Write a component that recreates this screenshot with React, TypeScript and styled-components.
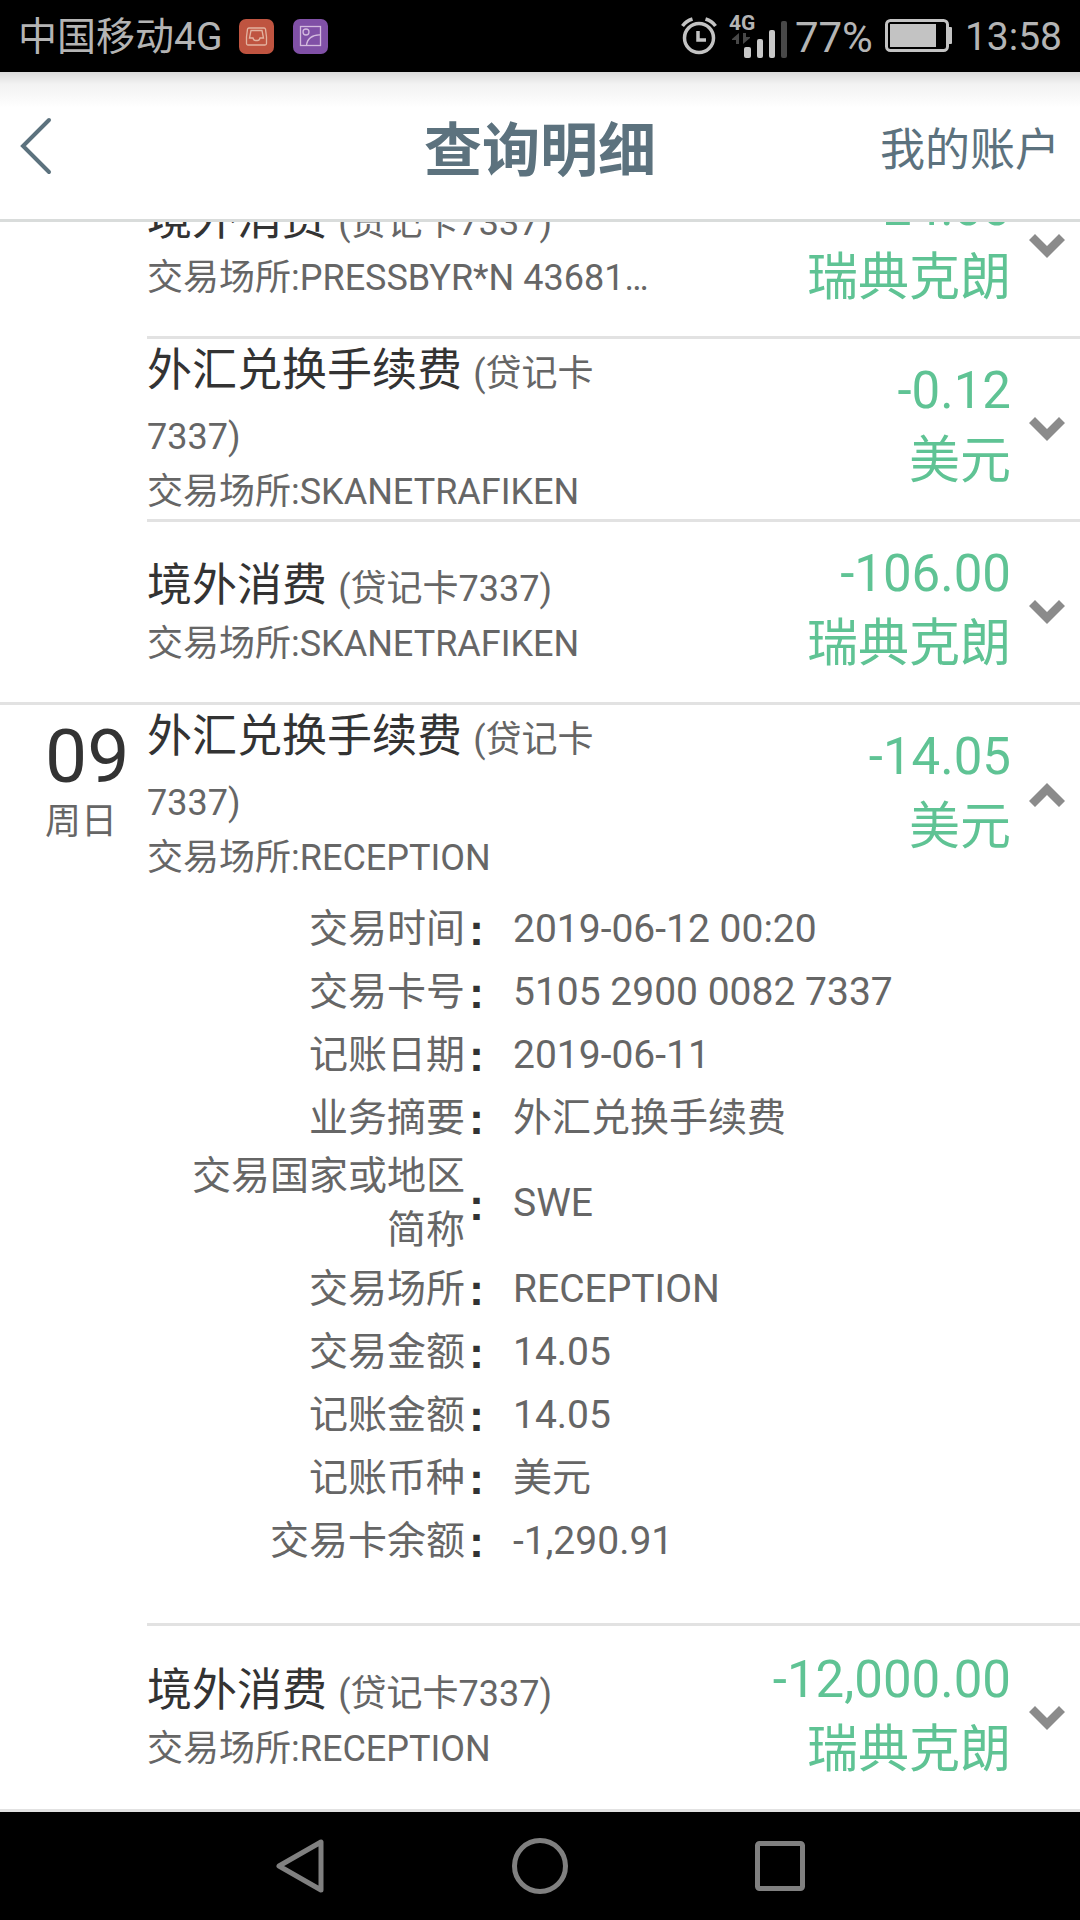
import React, { useState } from "react";
import styled, { createGlobalStyle } from "styled-components";

const GlobalStyle = createGlobalStyle`
  * { box-sizing: border-box; }
  body {
    margin: 0;
    background: #fff;
    font-family: Roboto, "Noto Sans CJK SC", sans-serif;
  }
  button {
    padding: 0;
    border: 0;
    background: none;
    font: inherit;
    cursor: pointer;
  }
`;

const Screen = styled.div`
  display: flex;
  flex-direction: column;
  min-height: 100vh;
`;

const StatusBar = styled.div`
  display: flex;
  align-items: center;
  justify-content: space-between;
  height: 72px;
  padding: 0 18px;
  background: #000;
  color: #b4b4b4;
  font-size: 39px;
  line-height: 69px;
`;

const StatusGroup = styled.div<{ $gap: number }>`
  display: flex;
  align-items: center;
  gap: ${(p) => p.$gap}px;
`;

const StatusText = styled.span`
  padding-top: 3px;
`;

const BatteryPercent = styled(StatusText)`
  font-size: 42px;
`;

const Network = styled.div`
  display: flex;
  align-items: flex-end;
  position: relative;
  height: 44px;
  margin-right: -4px;
`;

const NetworkType = styled.span`
  position: absolute;
  top: 0;
  left: 0;
  font-size: 21px;
  font-weight: 700;
  line-height: 18px;
`;

const Header = styled.header`
  display: grid;
  grid-template-columns: 1fr auto 1fr;
  align-items: center;
  height: 150px;
  padding: 0 20px;
  border-bottom: 3px solid #d9dcdb;
  background: linear-gradient(#dadada, #f2f2f2 12px, #fff 36px);
  color: #5c727e;
`;

const BackButton = styled.button`
  display: flex;
  justify-self: start;
  color: inherit;
`;

const Title = styled.h1`
  margin: 0;
  padding-top: 10px;
  font-size: 58px;
  font-weight: 700;
  line-height: 84px;
`;

const HeaderLink = styled.a`
  justify-self: end;
  padding-top: 10px;
  color: inherit;
  font-size: 45px;
  line-height: 66px;
  text-decoration: none;
`;

const Main = styled.main`
  flex: 1;
  overflow: hidden;
`;

const List = styled.div`
  margin-top: -66px;
`;

const DayGroup = styled.section`
  display: grid;
  grid-template-columns: 147px 1fr;
  border-bottom: 3px solid #e2e2e2;
`;

const DateCell = styled.div`
  padding: 12px 0 0 45px;
`;

const DayNumber = styled.div`
  color: #333;
  font-size: 75px;
  line-height: 78px;
`;

const Weekday = styled.div`
  color: #666;
  font-size: 36px;
  line-height: 54px;
`;

const Entry = styled.article`
  & + & {
    border-top: 3px solid #e2e2e2;
  }
`;

const EntryRow = styled.div`
  display: grid;
  grid-template-columns: 510px 1fr 69px;
  align-items: center;
  min-height: 180px;

  ${DayGroup}:last-child & {
    min-height: 183px;
  }

  ${DayGroup}:last-child ${Entry}:first-child & {
    min-height: 180px;
  }
`;

const EntryTitle = styled.h2`
  margin: 0;
  color: #333;
  font-size: 45px;
  font-weight: 400;
  line-height: 63px;
`;

const CardName = styled.span`
  color: #666;
  font-size: 36px;
  line-height: 36px;
`;

const Place = styled.p`
  margin: 0;
  overflow: hidden;
  color: #666;
  font-size: 36px;
  line-height: 54px;
  text-overflow: ellipsis;
  white-space: nowrap;
`;

const Amount = styled.div`
  padding-bottom: 6px;
  color: #5fc394;
  font-size: 51px;
  line-height: 70px;
  text-align: right;
  white-space: nowrap;
`;

const Toggle = styled.button<{ $open: boolean }>`
  display: flex;
  align-items: center;
  justify-content: center;
  height: 72px;
  padding-left: 3px;
  color: #8b8b8b;

  svg {
    transform: ${(p) => (p.$open ? "rotate(180deg)" : "none")};
  }
`;

const Details = styled.dl`
  margin: 0;
  padding: 12px 0 51px;
`;

const DetailRow = styled.div`
  display: grid;
  grid-template-columns: 318px 48px 1fr;
  align-items: center;
  min-height: 63px;
  color: #666;
  font-size: 39px;
  line-height: 54px;
`;

const DetailLabel = styled.dt`
  justify-self: end;
  width: 280px;
  text-align: right;
`;

const Colon = styled.span`
  padding: 3px 0 0 4px;
  color: #333;
  font-family: "Liberation Sans", sans-serif;
  font-size: 45px;
  font-weight: 700;
`;

const DetailValue = styled.dd`
  margin: 0;
`;

const NavBar = styled.nav`
  display: grid;
  grid-template-columns: repeat(3, 1fr);
  height: 108px;
  padding: 0 16.66%;
  background: #000;
`;

const NavButton = styled.button`
  display: flex;
  align-items: center;
  justify-content: center;
  color: #808080;
`;

type Transaction = {
  title: string;
  place: string;
  amount: string;
  currency: string;
  details?: [string, string][];
};

type Day = { day?: string; weekday?: string; entries: Transaction[] };

const days: Day[] = [
  {
    entries: [
      { title: "境外消费", place: "PRESSBYR*N 43681…", amount: "-24.00", currency: "瑞典克朗" },
      { title: "外汇兑换手续费", place: "SKANETRAFIKEN", amount: "-0.12", currency: "美元" },
      { title: "境外消费", place: "SKANETRAFIKEN", amount: "-106.00", currency: "瑞典克朗" },
    ],
  },
  {
    day: "09",
    weekday: "周日",
    entries: [
      {
        title: "外汇兑换手续费",
        place: "RECEPTION",
        amount: "-14.05",
        currency: "美元",
        details: [
          ["交易时间", "2019-06-12 00:20"],
          ["交易卡号", "5105 2900 0082 7337"],
          ["记账日期", "2019-06-11"],
          ["业务摘要", "外汇兑换手续费"],
          ["交易国家或地区简称", "SWE"],
          ["交易场所", "RECEPTION"],
          ["交易金额", "14.05"],
          ["记账金额", "14.05"],
          ["记账币种", "美元"],
          ["交易卡余额", "-1,290.91"],
        ],
      },
      { title: "境外消费", place: "RECEPTION", amount: "-12,000.00", currency: "瑞典克朗" },
    ],
  },
];

function TransactionEntry({ item }: { item: Transaction }) {
  const [open, setOpen] = useState(Boolean(item.details));
  return (
    <Entry>
      <EntryRow>
        <div>
          <EntryTitle>
            {item.title} <CardName>(贷记卡7337)</CardName>
          </EntryTitle>
          <Place>交易场所:{item.place}</Place>
        </div>
        <Amount>
          <div>{item.amount}</div>
          <div>{item.currency}</div>
        </Amount>
        <Toggle
          $open={open}
          aria-expanded={open}
          aria-label={open ? "收起" : "展开"}
          onClick={() => setOpen(!open)}
        >
          <svg width="36" height="24" viewBox="0 0 36 24" fill="currentColor">
            <path d="M0 6 6 0 18 12 30 0 36 6 18 24Z" />
          </svg>
        </Toggle>
      </EntryRow>
      {open && item.details && (
        <Details>
          {item.details.map(([label, value]) => (
            <DetailRow key={label}>
              <DetailLabel>{label}</DetailLabel>
              <Colon aria-hidden="true">:</Colon>
              <DetailValue>{value}</DetailValue>
            </DetailRow>
          ))}
        </Details>
      )}
    </Entry>
  );
}

function InboxIcon() {
  return (
    <svg width="35" height="35" viewBox="0 0 35 35" fill="none" stroke="#e3b3a0" strokeWidth="1.3">
      <rect width="35" height="35" rx="7" fill="#bf5440" stroke="none" />
      <path d="M10 9h15a1.500 1.500 0 0 1 1.500 1.200L27.500 18v6.500a1.500 1.500 0 0 1-1.500 1.500H9A1.500 1.500 0 0 1 7.500 24.500V18L8.500 10.200A1.500 1.500 0 0 1 10 9Z" />
      <path d="M12 11.500h11l1.500 7.500H21q-.5 2.500-2.500 2.500h-2Q14.500 21.500 14 19H10.500Z" />
    </svg>
  );
}

function PictureIcon() {
  return (
    <svg width="35" height="35" viewBox="0 0 35 35" fill="none" stroke="#d3bade" strokeWidth="1.3">
      <rect width="35" height="35" rx="7" fill="#8050a6" stroke="none" />
      <rect x="7.500" y="7.500" width="20" height="19" />
      <circle cx="13" cy="13" r="3" />
      <path d="M13.500 26.500C14 20 19 15.500 27.500 16" />
    </svg>
  );
}

function AlarmIcon() {
  return (
    <svg width="36" height="38" viewBox="0 0 36 38" fill="none" stroke="#c3c3c3">
      <circle cx="18" cy="21" r="14.500" strokeWidth="3.500" />
      <path d="M17 14v9h8" strokeWidth="3.500" />
      <path d="M1.500 9Q5 4 11.500 2M34.500 9Q31 4 24.500 2" strokeWidth="3.500" />
    </svg>
  );
}

function SignalIcon() {
  return (
    <svg width="58" height="44" viewBox="0 0 58 44" fill="#c8c8c8">
      <rect x="15" y="33" width="7" height="11" rx="2" />
      <rect x="28" y="25" width="6" height="19" rx="2" />
      <rect x="40" y="16" width="6" height="28" rx="2" />
      <rect x="52" y="7" width="6" height="37" rx="2" fill="#484848" />
      <path d="M3 25l7-6v11H7v-4H3ZM21 24l-7 6V19h3v4h4Z" fill="#484848" />
    </svg>
  );
}

function BatteryIcon() {
  return (
    <svg width="68" height="34" viewBox="0 0 68 34">
      <rect x="1.500" y="1.500" width="61" height="30" rx="4" fill="none" stroke="#c3c3c3" strokeWidth="3" />
      <rect x="5" y="5" width="46" height="23" fill="#c3c3c3" />
      <rect x="63" y="8" width="4" height="17" rx="1" fill="#c3c3c3" />
    </svg>
  );
}

export default function App() {
  return (
    <Screen>
      <GlobalStyle />
      <StatusBar>
        <StatusGroup $gap={17}>
          <StatusText>中国移动4G</StatusText>
          <StatusGroup $gap={19}>
            <InboxIcon />
            <PictureIcon />
          </StatusGroup>
        </StatusGroup>
        <StatusGroup $gap={12}>
          <AlarmIcon />
          <Network>
            <NetworkType>4G</NetworkType>
            <SignalIcon />
          </Network>
          <BatteryPercent>77%</BatteryPercent>
          <BatteryIcon />
          <StatusText>13:58</StatusText>
        </StatusGroup>
      </StatusBar>
      <Header>
        <BackButton aria-label="返回">
          <svg width="32" height="58" viewBox="0 0 32 58" fill="none" stroke="currentColor" strokeWidth="4" strokeLinecap="round">
            <path d="M29 3 3 29 29 55" />
          </svg>
        </BackButton>
        <Title>查询明细</Title>
        <HeaderLink href="#accounts">我的账户</HeaderLink>
      </Header>
      <Main>
        <List>
          {days.map((group, i) => (
            <DayGroup key={i}>
              <DateCell>
                {group.day && <DayNumber>{group.day}</DayNumber>}
                {group.weekday && <Weekday>{group.weekday}</Weekday>}
              </DateCell>
              <div>
                {group.entries.map((item, j) => (
                  <TransactionEntry key={j} item={item} />
                ))}
              </div>
            </DayGroup>
          ))}
        </List>
      </Main>
      <NavBar>
        <NavButton aria-label="返回上一页">
          <svg width="50" height="56" viewBox="0 0 50 56" fill="none" stroke="currentColor" strokeWidth="5" strokeLinejoin="round">
            <path d="M46 4V52L4 28Z" />
          </svg>
        </NavButton>
        <NavButton aria-label="主屏幕">
          <svg width="56" height="56" viewBox="0 0 56 56" fill="none" stroke="currentColor" strokeWidth="5">
            <circle cx="28" cy="28" r="25.500" />
          </svg>
        </NavButton>
        <NavButton aria-label="最近任务">
          <svg width="50" height="50" viewBox="0 0 50 50" fill="none" stroke="currentColor" strokeWidth="5">
            <rect x="2.500" y="2.500" width="45" height="45" rx="2" />
          </svg>
        </NavButton>
      </NavBar>
    </Screen>
  );
}
